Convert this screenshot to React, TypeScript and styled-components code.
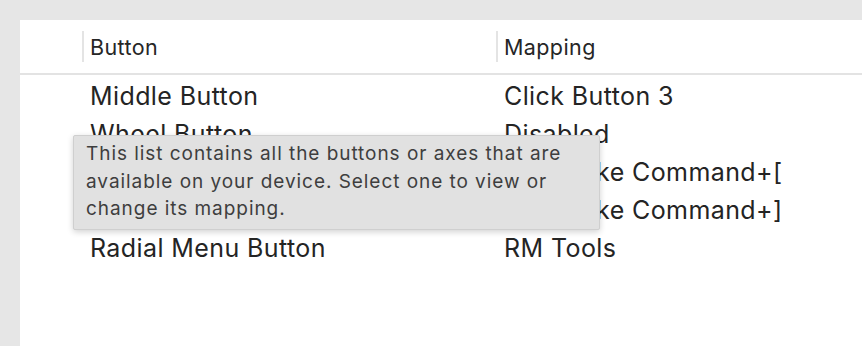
import React from 'react';
import styled, { createGlobalStyle } from 'styled-components';

const GlobalStyle = createGlobalStyle`
  html, body {
    margin: 0;
    padding: 0;
    background: #e6e6e6;
    font-family: Inter, "Open Sans", "Liberation Sans", sans-serif;
    -webkit-font-smoothing: antialiased;
  }
`;

const Window = styled.div`
  width: 862px;
  height: 346px;
  padding: 20px 0 0 20px;
  box-sizing: border-box;
  overflow: hidden;
`;

const Panel = styled.div`
  position: relative;
  background: #ffffff;
  height: 100%;
`;

const Columns = styled.div`
  display: grid;
  grid-template-columns: 62px 414px 1fr;
`;

const Header = styled(Columns)`
  height: 53px;
  align-items: center;
  border-bottom: 2px solid #e3e3e3;
`;

const HeaderCell = styled.div<{ divider?: boolean }>`
  height: 31px;
  display: flex;
  align-items: center;
  padding-left: 6px;
  border-left: ${p => (p.divider ? '2px solid #e4e4e4' : 'none')};
  font-size: 21.5px;
  letter-spacing: 0.4px;
  color: #262626;
`;

const Body = styled.div`
  padding-top: 2px;
`;

const Row = styled(Columns)`
  height: 38px;
  align-items: center;
`;

const Cell = styled.div`
  padding-left: 8px;
  font-size: 25px;
  letter-spacing: 0.4px;
  line-height: 38px;
  color: #242424;
  white-space: nowrap;
`;

const Tooltip = styled.div`
  position: absolute;
  left: 53px;
  top: 115px;
  width: 527px;
  height: 95px;
  box-sizing: border-box;
  padding: 4px 12px 6px 12px;
  background: #e1e1e1;
  border: 1px solid #cfcfcf;
  border-radius: 2px;
  box-shadow: 0 2px 6px rgba(0, 0, 0, 0.18);
  font-size: 19px;
  letter-spacing: 0.95px;
  line-height: 27.5px;
  color: #3e3e3e;
`;

const rows = [
  ['Middle Button', 'Click Button 3'],
  ['Wheel Button', 'Disabled'],
  ['Button 4', 'Keystroke Command+['],
  ['Button 5', 'Keystroke Command+]'],
  ['Radial Menu Button', 'RM Tools'],
];

const App: React.FC = () => {
  return (
    <>
      <GlobalStyle />
      <Window>
        <Panel>
          <Header>
            <div />
            <HeaderCell divider>Button</HeaderCell>
            <HeaderCell divider>Mapping</HeaderCell>
          </Header>
          <Body>
            {rows.map(([button, mapping], index) => (
              <Row key={index}>
                <div />
                <Cell>{button}</Cell>
                <Cell>{mapping}</Cell>
              </Row>
            ))}
          </Body>
          <Tooltip>
            This list contains all the buttons or axes that are available on your device. Select one to view or
            change its mapping.
          </Tooltip>
        </Panel>
      </Window>
    </>
  );
};

export default App;
